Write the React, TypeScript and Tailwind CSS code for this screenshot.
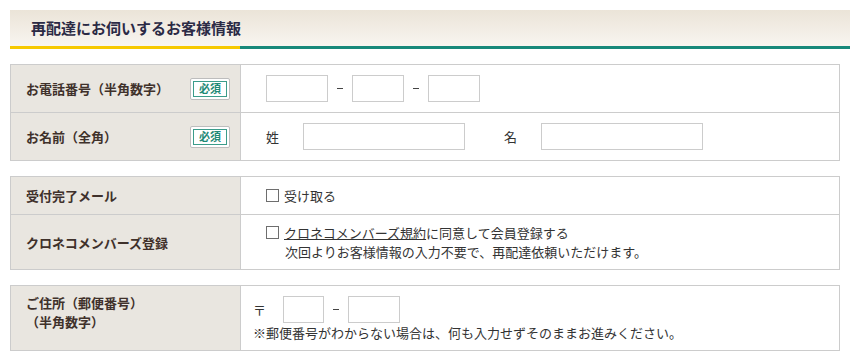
import React from 'react';

const font = { fontFamily: '"Noto Sans CJK JP", "Noto Sans", sans-serif' };

const Required = () => (
  <span className="inline-flex h-[22px] w-[40px] items-center justify-center rounded-[2px] border border-[#bdbdbd] bg-white p-[2px]">
    <span className="flex h-full w-full items-center justify-center border border-[#3b9c8a] text-[11px] font-bold leading-none text-[#1f8a76]">
      必須
    </span>
  </span>
);

const Box = ({ w }: { w: string }) => (
  <span className={`inline-block h-[27px] border border-[#cccccc] bg-white ${w}`} />
);

const Check = () => (
  <span className="inline-block h-[13px] w-[13px] shrink-0 border border-[#6e6e6e] bg-white" />
);

const Dash = () => (
  <span className="flex w-[24px] justify-center">
    <span className="h-px w-[6px] bg-[#444]" />
  </span>
);

const Label = ({ children, required, className = '' }: { children: React.ReactNode; required?: boolean; className?: string }) => (
  <div className={`flex w-[230px] shrink-0 justify-between border-r border-[#cccccc] bg-[#e9e6e0] pl-[15px] pr-[10px] text-[13px] font-bold leading-[19px] text-[#3f312b] ${className}`}>
    <div>{children}</div>
    {required && <Required />}
  </div>
);

const App = () => {
  return (
    <div className="min-h-[361px] bg-white pl-[10px] pt-[10px] text-[13px] text-[#333]" style={font}>
      {/* section header */}
      <div className="h-[36px] bg-gradient-to-b from-[#ebe4d8] to-[#f8f5f0] pl-[21px] pt-[8px] text-[15px] font-bold leading-[20px] text-[#2b2a45]">
        再配達にお伺いするお客様情報
      </div>
      <div className="flex h-[3px]">
        <div className="w-[230px] bg-[#f6c900]" />
        <div className="flex-1 bg-[#17897a]" />
      </div>

      {/* phone / name */}
      <div className="mt-[15px] w-[830px] border border-[#cccccc]">
        <div className="flex h-[48px] border-b border-[#cccccc]">
          <Label required className="items-center">お電話番号（半角数字）</Label>
          <div className="flex items-center pl-[25px]">
            <Box w="w-[62px]" />
            <Dash />
            <Box w="w-[52px]" />
            <Dash />
            <Box w="w-[52px]" />
          </div>
        </div>
        <div className="flex h-[47px]">
          <Label required className="items-center">お名前（全角）</Label>
          <div className="flex items-center pl-[25px]">
            <span className="w-[37px]">姓</span>
            <Box w="w-[162px]" />
            <span className="ml-[39px] w-[37px]">名</span>
            <Box w="w-[162px]" />
          </div>
        </div>
      </div>

      {/* mail / member */}
      <div className="mt-[15px] w-[830px] border border-[#cccccc]">
        <div className="flex h-[38px] border-b border-[#cccccc]">
          <Label className="items-center">受付完了メール</Label>
          <div className="flex items-center gap-[5px] pl-[25px]">
            <Check />
            <span>受け取る</span>
          </div>
        </div>
        <div className="flex h-[54px]">
          <Label className="items-center">クロネコメンバーズ登録</Label>
          <div className="flex flex-col justify-center pl-[25px] leading-[19px]">
            <div className="flex items-center gap-[5px]">
              <Check />
              <span>
                <span className="underline">クロネコメンバーズ規約</span>に同意して会員登録する
              </span>
            </div>
            <div className="pl-[19px]">次回よりお客様情報の入力不要で、再配達依頼いただけます。</div>
          </div>
        </div>
      </div>

      {/* address */}
      <div className="mt-[15px] w-[830px] border border-[#cccccc]">
        <div className="flex h-[64px]">
          <Label className="items-start pt-[7px]">
            ご住所（郵便番号）
            <br />
            （半角数字）
          </Label>
          <div className="flex flex-col pl-[12px] pt-[10px]">
            <div className="flex items-center">
              <span className="w-[30px]">〒</span>
              <Box w="w-[41px]" />
              <Dash />
              <Box w="w-[52px]" />
            </div>
            <div className="leading-[19px]">※郵便番号がわからない場合は、何も入力せずそのままお進みください。</div>
          </div>
        </div>
      </div>
    </div>
  );
};

export default App;
